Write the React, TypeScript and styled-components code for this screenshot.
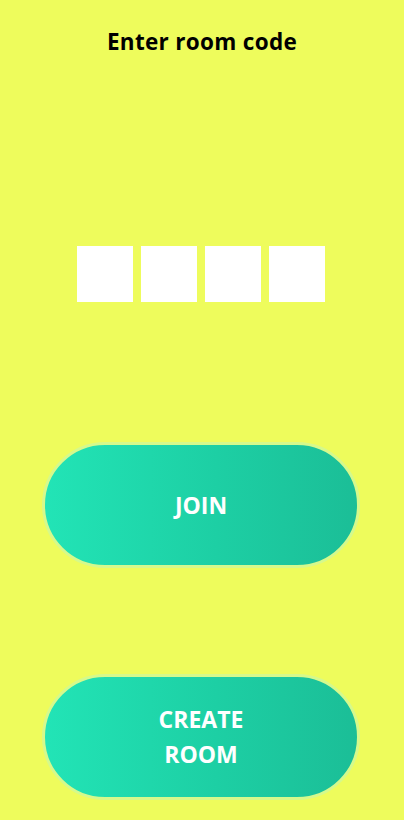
import React from "react";
import styled, { createGlobalStyle } from "styled-components";

const Global = createGlobalStyle`
  html, body {
    margin: 0;
    padding: 0;
    background: #eefc5c;
  }
  body {
    font-family: "Open Sans", "DejaVu Sans", sans-serif;
  }
`;

const Page = styled.div`
  width: 404px;
  min-height: 820px;
  display: flex;
  flex-direction: column;
  align-items: center;
  background: #eefc5c;
  box-sizing: border-box;
  padding-top: 27px;
`;

const Title = styled.h1`
  margin: 0;
  font-size: 22.5px;
  line-height: 30px;
  font-weight: 700;
  color: #000;
  letter-spacing: 0.3px;
`;

const CodeRow = styled.div`
  display: flex;
  gap: 8px;
  margin-top: 189px;
  margin-right: 2px;
`;

const CodeBox = styled.input`
  width: 56px;
  height: 56px;
  border: none;
  outline: none;
  background: #ffffff;
  padding: 0;
  box-sizing: border-box;
  text-align: center;
  font-size: 28px;
`;

const PillButton = styled.button<{ $top: number }>`
  margin-top: ${(p) => p.$top}px;
  margin-right: 2px;
  width: 318px;
  height: 126px;
  box-sizing: border-box;
  border: 3px solid #d5f98c;
  border-radius: 63px;
  background: linear-gradient(90deg, #22e4b6 0%, #1dcfa4 55%, #1bbe97 100%);
  color: #ffffff;
  font-family: "Open Sans", "DejaVu Sans", sans-serif;
  font-size: 23px;
  font-weight: 700;
  line-height: 35px;
  text-transform: uppercase;
  display: flex;
  align-items: center;
  justify-content: center;
  text-align: center;
  cursor: pointer;
  padding: 0;
`;

const Label = styled.span`
  display: block;
  width: 110px;
`;

export default function App() {
  return (
    <>
      <Global />
      <Page>
        <Title>Enter room code</Title>
        <CodeRow>
          <CodeBox maxLength={1} />
          <CodeBox maxLength={1} />
          <CodeBox maxLength={1} />
          <CodeBox maxLength={1} />
        </CodeRow>
        <PillButton $top={140}>
          <Label>Join</Label>
        </PillButton>
        <PillButton $top={106}>
          <Label>Create Room</Label>
        </PillButton>
      </Page>
    </>
  );
}
